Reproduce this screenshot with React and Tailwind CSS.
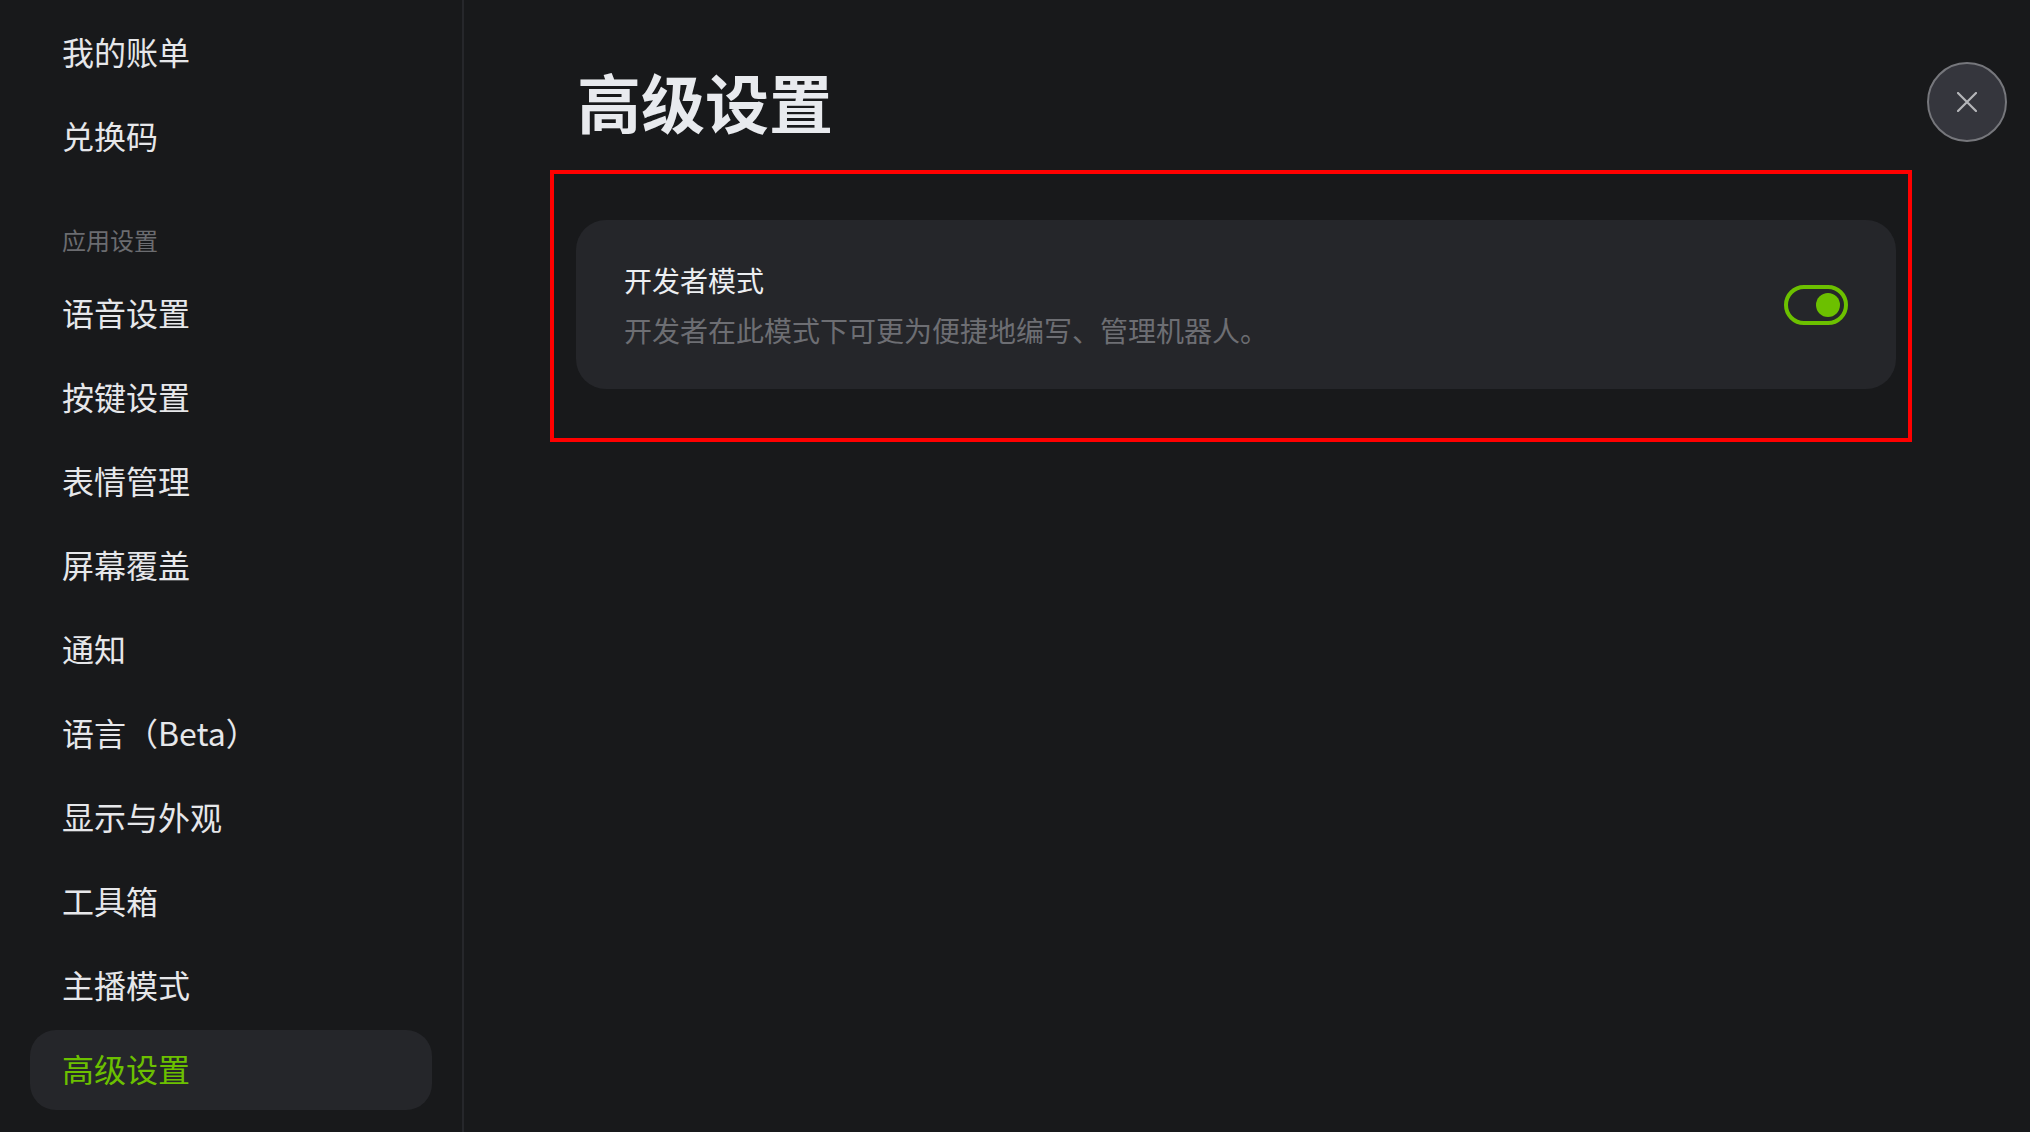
const FONT = {
  fontFamily: '"Noto Sans CJK SC", "Noto Sans", Inter, sans-serif',
};

const topItems = ["我的账单", "兑换码"];
const appItems = [
  "语音设置",
  "按键设置",
  "表情管理",
  "屏幕覆盖",
  "通知",
  "语言（Beta）",
  "显示与外观",
  "工具箱",
  "主播模式",
  "高级设置",
];

function NavItem({ label, active }) {
  return (
    <div
      className={
        active
          ? "h-[80px] flex items-center px-[32px] pb-[4px] rounded-[26px] bg-[#25262a] text-[32px] leading-[40px] text-[#6cc000]"
          : "h-[80px] flex items-center px-[32px] pb-[4px] rounded-[26px] text-[32px] leading-[40px] text-[#e6e7ea]"
      }
    >
      {label}
    </div>
  );
}

export default function App() {
  return (
    <main
      className="w-screen h-screen flex bg-[#18191b] overflow-hidden"
      style={FONT}
    >
      {/* Sidebar */}
      <aside className="w-[464px] shrink-0 border-r-2 border-[#26272b] px-[30px] pt-[13px]">
        <div className="flex flex-col gap-[4px]">
          {topItems.map((t) => (
            <NavItem key={t} label={t} />
          ))}
        </div>
        <div className="mt-[46px] mb-[17px] px-[32px] text-[24px] leading-[34px] text-[#6b6c70]">
          应用设置
        </div>
        <div className="flex flex-col gap-[4px]">
          {appItems.map((t) => (
            <NavItem key={t} label={t} active={t === "高级设置"} />
          ))}
        </div>
      </aside>

      {/* Content */}
      <section className="relative flex-1 pl-[86px] pt-[60px]">
        <h1 className="pl-[27px] h-[80px] text-[64px] leading-[80px] font-bold text-[#e8eaee]">
          高级设置
        </h1>

        <div className="mt-[30px] w-[1362px] border-4 border-[#ff0000] pt-[46px] pl-[22px] pr-[12px] pb-[49px]">
          <div className="h-[169px] rounded-[30px] bg-[#25262a] flex items-center justify-between pl-[48px] pr-[48px]">
            <div className="flex flex-col gap-[14px]">
              <div className="text-[28px] leading-[36px] text-[#eceef1]">
                开发者模式
              </div>
              <div className="text-[28px] leading-[36px] text-[#6d6e73]">
                开发者在此模式下可更为便捷地编写、管理机器人。
              </div>
            </div>
            <button className="w-[64px] h-[40px] rounded-full border-4 border-[#6cc000] flex items-center justify-end p-[4px]">
              <span className="block w-[24px] h-[24px] rounded-full bg-[#6cc000]" />
            </button>
          </div>
        </div>

        {/* Close */}
        <button className="absolute top-[62px] right-[23px] w-[80px] h-[80px] rounded-full border-2 border-[#76777c] bg-[#35363d] flex items-center justify-center">
          <svg width="20" height="20" viewBox="0 0 20 20" fill="none">
            <path
              d="M1 1L19 19M19 1L1 19"
              stroke="#b5b6ba"
              strokeWidth="2.2"
              strokeLinecap="round"
            />
          </svg>
        </button>
      </section>
    </main>
  );
}
